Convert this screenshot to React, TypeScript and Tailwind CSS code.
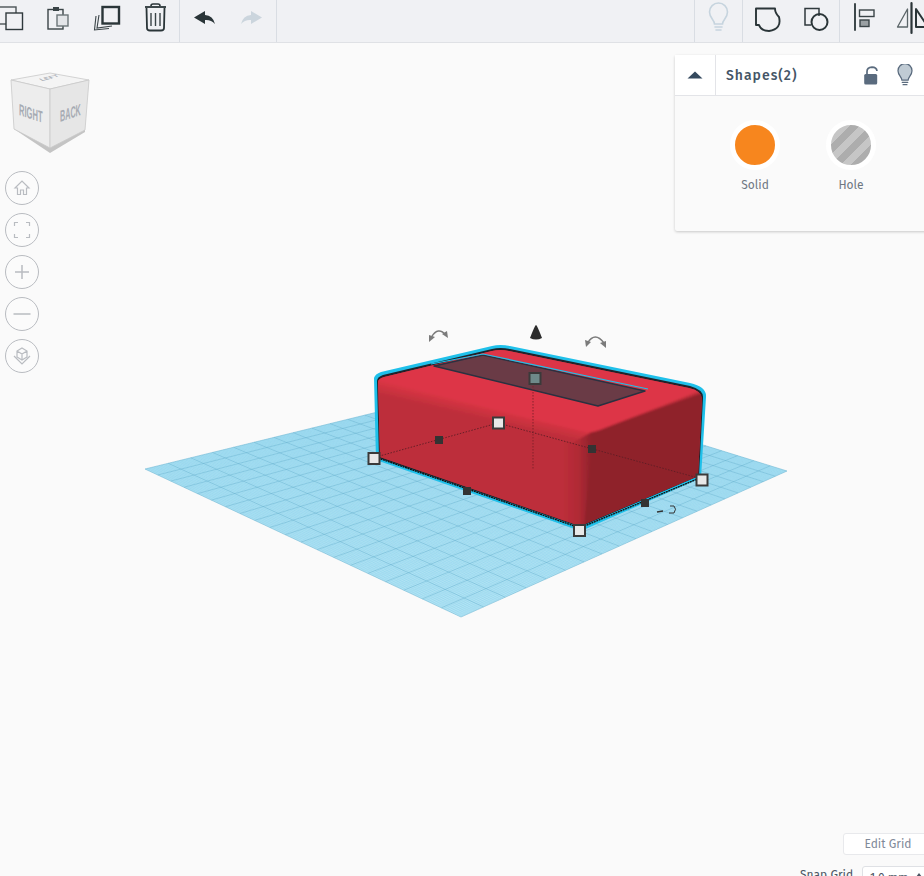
import React from "react";

const FONT = "font-['Fira_Sans','Noto_Sans','Open_Sans',sans-serif]";

type P = [number, number];
function homography(a: P, b: P, c: P, d: P) {
  const dx1 = b[0] - c[0], dx2 = d[0] - c[0], sx = a[0] - b[0] + c[0] - d[0];
  const dy1 = b[1] - c[1], dy2 = d[1] - c[1], sy = a[1] - b[1] + c[1] - d[1];
  const den = dx1 * dy2 - dx2 * dy1;
  const g = (sx * dy2 - dx2 * sy) / den;
  const h = (dx1 * sy - sx * dy1) / den;
  const A = b[0] - a[0] + g * b[0], B = d[0] - a[0] + h * d[0], C = a[0];
  const D = b[1] - a[1] + g * b[1], E = d[1] - a[1] + h * d[1], F = a[1];
  return (u: number, v: number): string => {
    const w = g * u + h * v + 1;
    return `${((A * u + B * v + C) / w).toFixed(2)} ${((D * u + E * v + F) / w).toFixed(2)}`;
  };
}
const L: P = [145, 469], B: P = [461, 617], R: P = [787, 471], T: P = [500, 382];
const map = homography(L, B, R, T);
let minor = "", major = "";
for (let i = 0; i <= 200; i++) {
  const t = i / 200;
  const s = `M${map(t, 0)}L${map(t, 1)}M${map(0, t)}L${map(1, t)}`;
  if (i % 10 === 0) major += s; else minor += s;
}

const BODY = "M380 457 L378 382 Q378 379 384 377 L492 351 Q500 349 509 351 L689 388 Q702 391 702 399 L698 476 L580 526 Z";

function Ico({ x, children, w = 48 }: { x: number; w?: number; children: React.ReactNode }) {
  return (
    <button className="flex h-full shrink-0 items-center justify-center" style={{ width: w }}>
      <svg width={w} height={43} viewBox={`${x} 0 ${w} 43`} fill="none">{children}</svg>
    </button>
  );
}

function Bulb({ x, y, s = 1, stroke, fill = "none" }: { x: number; y: number; s?: number; stroke: string; fill?: string }) {
  return (
    <g transform={`translate(${x} ${y}) scale(${s})`} stroke={stroke} strokeWidth={1.6} fill="none" strokeLinecap="round">
      <path d="M-4 10 C-4 6 -9 4 -9 -2 A9 9 0 0 1 9 -2 C9 4 4 6 4 10 Z" fill={fill} />
      <path d="M-3.5 13H3.5M-2.5 16H2.5" />
    </g>
  );
}

function RoundBtn({ children }: { children: React.ReactNode }) {
  return (
    <button className="flex h-[34px] w-[34px] items-center justify-center rounded-full border border-[#b9bcc1] bg-[#fbfbfb]">
      <svg width="22" height="22" viewBox="0 0 22 22" fill="none" stroke="#b9bcc1" strokeWidth="1.2">{children}</svg>
    </button>
  );
}

function Handle({ x, y, tint = "#e8e8e8" }: { x: number; y: number; tint?: string }) {
  return <rect x={x - 5.5} y={y - 5.5} width={11} height={11} fill={tint} stroke="#3a3a3a" strokeWidth={2} />;
}
function Dot({ x, y }: { x: number; y: number }) {
  return <rect x={x - 4} y={y - 4} width={8} height={8} fill="#333333" />;
}

function Scene() {
  return (
    <svg className="absolute inset-0" width={924} height={876} viewBox="0 0 924 876" fill="none">
      <defs>
        <linearGradient id="chamfer" gradientUnits="userSpaceOnUse" x1="480" y1="403" x2="476.5" y2="418">
          <stop offset="0" stopColor="#dd3646" />
          <stop offset="1" stopColor="#bd2e3a" />
        </linearGradient>
        <linearGradient id="corner" gradientUnits="userSpaceOnUse" x1="562" y1="480" x2="592" y2="480">
          <stop offset="0" stopColor="#bd2e3a" />
          <stop offset="0.55" stopColor="#b02a35" />
          <stop offset="1" stopColor="#8f222b" />
        </linearGradient>
        <clipPath id="bodyClip"><path d={BODY} /></clipPath>
        <filter id="soft" x="-5%" y="-5%" width="110%" height="110%"><feGaussianBlur stdDeviation="1.1" /></filter>
      </defs>
      {/* work plane */}
      <polygon points="145,469 461,617 787,471 500,382" fill="#b8e6f5" />
      <path d={minor} stroke="#6cc4e6" strokeWidth={0.32} opacity={0.65} />
      <path d={major} stroke="#5fafd0" strokeWidth={0.7} opacity={0.72} />

      {/* blue selection halo */}
      <path d="M376 460 L374 378 Q375 374 381 372 L492 346 Q500 344 510 346 L690 383 Q707 387 706 397 L701 478 L581 531 Z" fill="#1fc0ea" />
      {/* body */}
      <path d="M379 458 L377 381 Q377 377 383 375 L492 349 Q500 347 510 349 L690 386 Q704 390 703 398 L699 476 L580 527 Z" fill="#20232b" />
      <path d={BODY} fill="#bd2e3a" />
      <g clipPath="url(#bodyClip)">
        <g filter="url(#soft)">
          <rect x="370" y="340" width="345" height="195" fill="#bd2e3a" />
          {/* right face */}
          <path d="M586 432 Q592 432 598 430 L710 390 L710 480 L582 530 Z" fill="#8f222b" />
          {/* front-right rounded corner */}
          <path d="M562 426 L586 432 Q592 433 592 440 L584 530 L560 522 Z" fill="url(#corner)" />
          {/* front face chamfer */}
          <path d="M370 379 L592 432 L572 443 L370 394 Z" fill="url(#chamfer)" />
          {/* top face */}
          <path d="M370 379 L500 340 L715 385 L600 430 Q592 433 586 432 Z" fill="#dd3646" />
        </g>
      </g>
      {/* hole slot */}
      <polygon points="434,366 483,355 645,391 598,406" fill="#6a3b46" stroke="#2a3140" strokeWidth={1.4} strokeLinejoin="round" />
      <path d="M431 364 L483 354 L648 389" stroke="#1fc0ea" strokeWidth={1.2} />
      {/* guides */}
      <path d="M376 457 L498 423 L702 479" stroke="#5c1d25" strokeWidth={0.9} strokeDasharray="1.5 1.5" />
      <path d="M533 380 L533 470" stroke="#7d2029" strokeWidth={0.9} strokeDasharray="1.5 1.5" />
      {/* bottom black dotted edge */}
      <path d="M378 458 L580 528 L700 478" stroke="#111111" strokeWidth={1.4} strokeDasharray="2 0.6" />

      <Dot x={439} y={440} />
      <Dot x={592} y={449} />
      <Dot x={467} y={491} />
      <Dot x={645} y={503} />
      <Handle x={374} y={458.5} />
      <Handle x={498.5} y={423} />
      <Handle x={702} y={480} />
      <Handle x={579.5} y={530.5} />
      <Handle x={535} y={378.5} tint="#6f8a8a" />

      {/* height cone */}
      <path d="M536 325 Q537 325 542 338 Q536 341 530 338 Q535 325 536 325 Z" fill="#2c2c2c" />
      {/* rotate arrows */}
      <g stroke="#7b7b7b" strokeWidth={1.4}>
        <path d="M431.5 337 Q438 326 446 335" />
        <path d="M587.5 343 Q595 331 604 343" />
      </g>
      <g fill="#7b7b7b">
        <polygon points="429,342 429,335 435,337" />
        <polygon points="448,338 447,331 442,334" />
        <polygon points="586,347 585,340 591,342" />
        <polygon points="606,348 606,341 600,343" />
      </g>
      {/* small rotation tick */}
      <path d="M657 512 L663 511" stroke="#333" strokeWidth={1.4} />
      <path d="M670 506 L674 506 Q677 509 674 513 L669 513" stroke="#333" strokeWidth={1} />

      {/* view cube */}
      <polygon points="14,129 50,153 85,132 85,126 50,146 14,124" fill="#c4c4c4" />
      <polygon points="11,80 50,73 89,80 50,89" fill="#f4f4f4" stroke="#c9c9c9" strokeWidth={0.8} />
      <polygon points="11,80 50,89 50,148 14,129" fill="#ededed" stroke="#c9c9c9" strokeWidth={0.8} />
      <polygon points="89,80 50,89 50,148 85,130" fill="#e6e6e6" stroke="#c9c9c9" strokeWidth={0.8} />
      <text transform="matrix(0.63 0.21 0 1.35 19 115)" fontFamily="'Liberation Sans',sans-serif" fontSize="12" fontWeight="700" fill="#a6abb3">RIGHT</text>
      <text transform="matrix(0.6 -0.2 0 1.35 60 122)" fontFamily="'Liberation Sans',sans-serif" fontSize="12" fontWeight="700" fill="#a6abb3">BACK</text>
      <text transform="matrix(0.7 -0.18 0.5 0.3 42 81)" fontFamily="'Liberation Sans',sans-serif" fontSize="10" fontWeight="700" fill="#a9adb4">LEFT</text>
    </svg>
  );
}

export default function App() {
  return (
    <div className={`relative flex h-[876px] w-[924px] flex-col overflow-hidden bg-[#fafafa] ${FONT}`}>
      <Scene />
      {/* toolbar */}
      <div className="relative flex h-[43px] shrink-0 items-stretch border-b border-[#dfe1e5] bg-[#f0f1f4]">
        <div className="ml-[-14px] flex w-[194px] shrink-0 border-r border-[#d9dde3]">
          <Ico x={-14}>
            <rect x="-2" y="7" width="18" height="17" stroke="#4a5356" strokeWidth="1.4" />
            <rect x="6" y="13" width="16.5" height="16.5" fill="#f0f1f4" stroke="#2f393c" strokeWidth="1.4" />
          </Ico>
          <Ico x={34}>
            <rect x="48" y="9.5" width="15" height="19.5" stroke="#3a4447" strokeWidth="1.4" />
            <rect x="53" y="7" width="6" height="4" fill="#3a4447" />
            <rect x="57" y="15" width="11" height="11" fill="#e3e5e8" stroke="#6b7578" strokeWidth="1.4" />
          </Ico>
          <Ico x={82}>
            <path d="M96 16 L94.5 30 L109 28.5" stroke="#3a4447" strokeWidth="1.1" />
            <path d="M99 15 L97 28 L112 26" stroke="#3a4447" strokeWidth="1.1" />
            <rect x="102.5" y="7" width="16.5" height="16.5" fill="#f0f1f4" stroke="#2a3538" strokeWidth="2.4" />
          </Ico>
          <Ico x={130}>
            <path d="M145 7 H166" stroke="#2a3538" strokeWidth="1.8" />
            <path d="M151 6 Q151 4 153 4 H158 Q160 4 160 6" stroke="#2a3538" strokeWidth="1.6" />
            <path d="M146.5 8 L147 28 Q147 30.5 150 30.5 H161 Q164 30.5 164 28 L164.5 8" stroke="#2a3538" strokeWidth="1.8" />
            <path d="M151 13V26M155.5 13V26M160 13V26" stroke="#3a4447" strokeWidth="1.4" />
          </Ico>
        </div>
        <div className="flex w-[97px] shrink-0 border-r border-[#d9dde3]">
          <Ico x={180}>
            <path d="M194 17.5 L205 11 V15 Q213 15.5 215 24 Q211 19.5 205 20 V24 Z" fill="#2a3538" />
          </Ico>
          <Ico x={228}>
            <path d="M262 17.5 L251 11 V15 Q243 15.5 241 24 Q245 19.5 251 20 V24 Z" fill="#cbd5dd" />
          </Ico>
        </div>
        <div className="flex-1" />
        <div className="flex w-[49px] shrink-0 border-x border-[#d9dde3]">
          <Ico x={694} w={47}>
            <Bulb x={717.5} y={14} stroke="#c6d4de" />
          </Ico>
        </div>
        <div className="flex w-[97px] shrink-0 border-r border-[#d9dde3]">
          <Ico x={743}>
            <path d="M756 8.5 H775 Q775 13 779 17 Q782 29 769 31 Q761 31 759 25 H756 Z" stroke="#2a3538" strokeWidth="1.9" strokeLinejoin="round" />
          </Ico>
          <Ico x={791}>
            <path d="M819 16 V8.5 H805 V25 H811" stroke="#2f393c" strokeWidth="1.5" />
            <circle cx="819.5" cy="22" r="8" stroke="#2a3538" strokeWidth="2" />
          </Ico>
        </div>
        <div className="flex w-[84px] shrink-0 overflow-hidden">
          <Ico x={840}>
            <path d="M855 4 V30" stroke="#2a3538" strokeWidth="1.8" strokeLinecap="round" />
            <rect x="859.5" y="10" width="14.5" height="6.5" stroke="#3a4447" strokeWidth="1.4" />
            <rect x="860" y="20" width="9" height="6.5" fill="#9aa0a3" stroke="#3a4447" strokeWidth="1.4" />
          </Ico>
          <Ico x={888}>
            <path d="M911.5 3 V33" stroke="#2a3538" strokeWidth="2.2" strokeLinecap="round" />
            <path d="M907.5 9 V27 H897.5 Z" stroke="#5b6568" strokeWidth="1.3" strokeLinejoin="round" />
            <path d="M916 9 V27 H928 Z" stroke="#2a3538" strokeWidth="2" strokeLinejoin="round" />
          </Ico>
        </div>
      </div>

      {/* view controls */}
      <div className="absolute left-[5px] top-[171px] flex flex-col gap-[8px]">
        <RoundBtn>
          <path d="M4 11 L11 4 L18 11 H15.5 V17.5 H12.5 V13 H9.5 V17.5 H6.5 V11 Z" />
        </RoundBtn>
        <RoundBtn>
          <path d="M3.5 7V3.5H7M15 3.5H18.5V7M18.5 15V18.5H15M7 18.5H3.5V15" />
        </RoundBtn>
        <RoundBtn>
          <path d="M11 4V18M4 11H18" strokeWidth="1.5" />
        </RoundBtn>
        <RoundBtn>
          <path d="M2.5 11H19.5" strokeWidth="1.5" />
        </RoundBtn>
        <RoundBtn>
          <path d="M11 3L16 6V12L11 15L6 12V6ZM6 6L11 9L16 6M11 9V15M3 11L11 19L19 11" />
        </RoundBtn>
      </div>

      {/* inspector */}
      <div className="absolute left-[675px] top-[55px] flex h-[176px] w-[260px] flex-col rounded-[2px] bg-[#fafafa] shadow-[0_1px_3px_rgba(0,0,0,0.2)]">
        <div className="flex h-[41px] shrink-0 items-center border-b border-[#e3e4e8] bg-white">
          <div className="flex h-full w-[41px] shrink-0 items-center justify-center border-r border-[#e3e4e8]">
            <svg width="16" height="10" viewBox="0 0 16 10"><path d="M8 1.5 L15.5 8.5 H0.5 Z" fill="#34495e" /></svg>
          </div>
          <span className="ml-[10px] w-[72px] shrink-0 whitespace-nowrap pt-[2px] text-[14px] font-medium leading-[20px] tracking-[1px] text-[#445566]">Shapes(2)</span>
          <svg className="ml-[66px] shrink-0" width="14" height="19" viewBox="0 0 14 19" fill="none">
            <path d="M3 8 V5.5 Q3 1.5 8 1.2 Q12.5 1.2 13 5" stroke="#5a6b7e" strokeWidth="1.7" />
            <rect x="0.2" y="8" width="13" height="10.5" rx="1.5" fill="#5a6b7e" />
          </svg>
          <svg className="ml-[19px] shrink-0" width="16" height="22" viewBox="-8.5 -9 17 24"><Bulb x={0} y={0} s={0.85} stroke="#5a6b7e" fill="#c0cbd4" /></svg>
        </div>
        <div className="mt-[24px] flex pl-[55px]">
          <div className="flex w-[50px] flex-col items-center">
            <div className="h-[50px] w-[50px] shrink-0 rounded-full border-[5px] border-white bg-[#f7861e]" />
            <span className="mt-[6px] text-[12px] leading-[18px] text-[#6e7782]">Solid</span>
          </div>
          <div className="ml-[46px] flex w-[50px] flex-col items-center">
            <div className="h-[50px] w-[50px] shrink-0 rounded-full border-[5px] border-white bg-[repeating-linear-gradient(135deg,#adadad_0px,#adadad_7px,#c6c6c6_7px,#c6c6c6_14px)]" />
            <span className="mt-[6px] text-[12px] leading-[18px] text-[#6e7782]">Hole</span>
          </div>
        </div>
      </div>

      {/* grid controls */}
      <button className="absolute left-[843px] top-[833px] h-[22px] w-[90px] rounded-[3px] border border-[#e8e9ec] bg-white text-center text-[12px] leading-[20px] text-[#7f8a99]">Edit Grid</button>
      <div className="absolute left-[800px] top-[866px] flex items-start whitespace-nowrap text-[12px] leading-[16px] text-[#4a5563]">
        <span className="w-[55px] shrink-0 pt-[1px]">Snap Grid</span>
        <div className="relative ml-[7px] h-[24px] w-[70px] shrink-0 rounded-[3px] border border-[#dfe1e5] bg-white pl-[7px] pt-[3px]">
          1.0 mm
          <span className="absolute left-[53px] top-[6px] h-0 w-0 border-x-[3px] border-b-[4px] border-x-transparent border-b-[#4a5563]" />
        </div>
      </div>
    </div>
  );
}
